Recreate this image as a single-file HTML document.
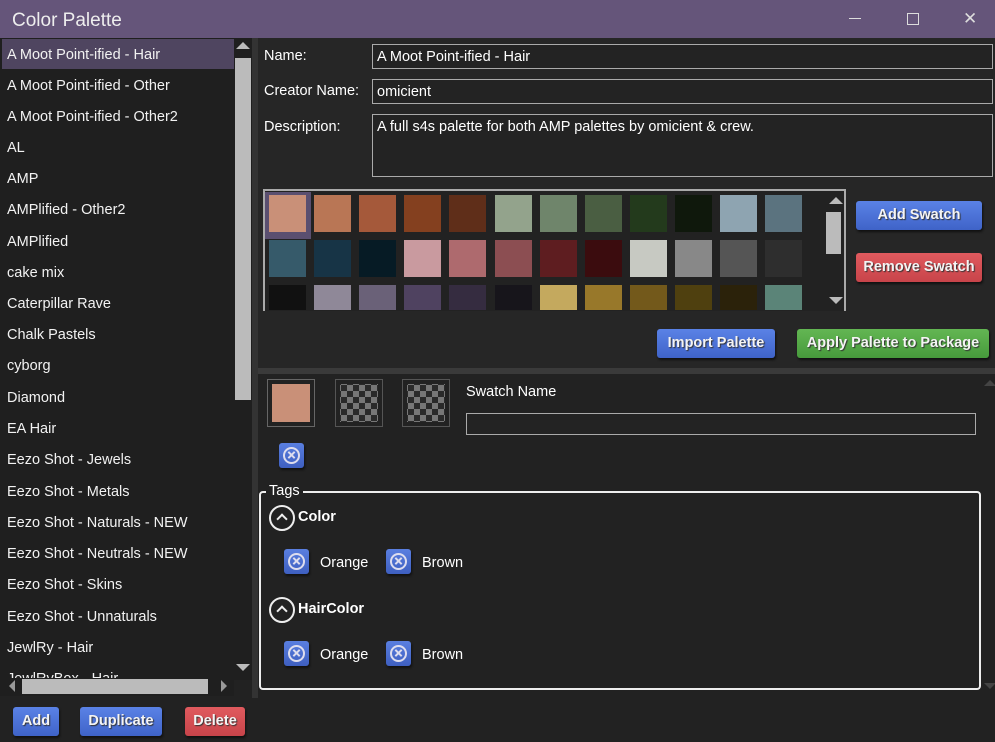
<!DOCTYPE html>
<html><head><style>
*{margin:0;padding:0;box-sizing:border-box}
body{width:995px;height:742px;background:#222;font-family:"Liberation Sans",sans-serif;color:#fff;position:relative;overflow:hidden;font-size:14.5px;line-height:1.45}
.a{position:absolute}
.title{left:0;top:0;width:995px;height:38px;background:#65557a}
.li{position:absolute;left:7px;font-size:14.5px;color:#f2f2f2;margin-top:2px}
.btn{position:absolute;border-radius:3px;font-weight:bold;font-size:14.5px;color:#f4f4f4;text-align:center;text-shadow:1px 1px 1px #333;box-shadow:1px 2px 2px #111}
.blue{background:linear-gradient(#5a82e6,#3f63c8)}
.red{background:linear-gradient(#e05a5e,#c8444a)}
.green{background:linear-gradient(#63b653,#479a3c)}
.inp{position:absolute;border:1px solid #aaa;background:#232323;padding:2px 4px 0;font-size:14.5px}
.sw{position:absolute;width:37px;height:37px}
.x{position:absolute;width:25px;height:25px;border-radius:3px;background:linear-gradient(#5a7fe0,#3e5fc0);box-shadow:1px 2px 2px #111}
.x:after{content:"";position:absolute;left:4px;top:4px;width:13px;height:13px;border:2px solid #dde;border-radius:50%}
.x i{position:absolute;left:8px;top:11px;width:9px;height:2px;background:#dde}
.x i.p{transform:rotate(45deg)}.x i.q{transform:rotate(-45deg)}
.chk{position:absolute;width:48px;height:48px;border:1px solid #555;background-color:#2a2a2a;background-image:linear-gradient(45deg,#777 25%,transparent 25%,transparent 75%,#777 75%),linear-gradient(45deg,#777 25%,transparent 25%,transparent 75%,#777 75%);background-size:12px 12px;background-position:5px 5px,11px 11px;background-clip:content-box;padding:4px}
.up{position:absolute;width:26px;height:26px;border:2px solid #eee;border-radius:50%}
.up:after{content:"";position:absolute;left:7px;top:8px;width:6px;height:6px;border-left:2px solid #eee;border-top:2px solid #eee;transform:rotate(45deg)}
</style></head><body>
<div class="a title"></div>
<div class="a" style="left:12px;top:7px;font-size:19px;color:#eee">Color Palette</div>
<div class="a" style="left:849px;top:18px;width:12px;height:1px;background:#ddd"></div>
<div class="a" style="left:907px;top:13px;width:12px;height:12px;border:1px solid #ddd"></div>
<div class="a" style="left:963px;top:10px;font-size:17px;color:#ddd;line-height:18px">✕</div>

<div class="a" style="left:0;top:38px;width:234px;height:642px;background:#1f1f1f"></div>
<div class="a" style="left:2px;top:39px;width:232px;height:30px;background:#4f4560"></div>
<div class="li" style="top:43px">A Moot Point-ified - Hair</div>
<div class="li" style="top:74px">A Moot Point-ified - Other</div>
<div class="li" style="top:105px">A Moot Point-ified - Other2</div>
<div class="li" style="top:136px">AL</div>
<div class="li" style="top:167px">AMP</div>
<div class="li" style="top:198px">AMPlified - Other2</div>
<div class="li" style="top:230px">AMPlified</div>
<div class="li" style="top:261px">cake mix</div>
<div class="li" style="top:292px">Caterpillar Rave</div>
<div class="li" style="top:323px">Chalk Pastels</div>
<div class="li" style="top:354px">cyborg</div>
<div class="li" style="top:386px">Diamond</div>
<div class="li" style="top:417px">EA Hair</div>
<div class="li" style="top:448px">Eezo Shot - Jewels</div>
<div class="li" style="top:480px">Eezo Shot - Metals</div>
<div class="li" style="top:511px">Eezo Shot - Naturals - NEW</div>
<div class="li" style="top:542px">Eezo Shot - Neutrals - NEW</div>
<div class="li" style="top:573px">Eezo Shot - Skins</div>
<div class="li" style="top:605px">Eezo Shot - Unnaturals</div>
<div class="li" style="top:636px">JewlRy - Hair</div>
<div class="li" style="top:667px;height:11px;overflow:hidden">JewlRyBox - Hair</div>
<div class="a" style="left:234px;top:38px;width:18px;height:642px;background:#1f1f1f"></div>
<div class="a" style="left:236px;top:42px;width:0;height:0;border:7px solid transparent;border-bottom-color:#bbb;border-top:0"></div>
<div class="a" style="left:235px;top:58px;width:16px;height:342px;background:#bbb"></div>
<div class="a" style="left:236px;top:664px;width:0;height:0;border:7px solid transparent;border-top-color:#bbb;border-bottom:0"></div>
<div class="a" style="left:0;top:678px;width:234px;height:18px;background:#1f1f1f"></div>
<div class="a" style="left:22px;top:679px;width:186px;height:15px;background:#bbb"></div>
<div class="a" style="left:9px;top:680px;border:6px solid transparent;border-right-color:#999;border-left:0"></div>
<div class="a" style="left:221px;top:680px;border:6px solid transparent;border-left-color:#999;border-right:0"></div>
<div class="a" style="left:252px;top:38px;width:6px;height:660px;background:#333"></div>

<div class="btn blue" style="left:13px;top:707px;width:46px;height:29px;line-height:29px">Add</div>
<div class="btn blue" style="left:80px;top:707px;width:82px;height:29px;line-height:29px">Duplicate</div>
<div class="btn red" style="left:185px;top:707px;width:60px;height:29px;line-height:29px">Delete</div>

<div class="a" style="left:258px;top:38px;width:737px;height:330px;background:#262626"></div>
<div class="a" style="left:264px;top:46px">Name:</div>
<div class="a" style="left:264px;top:81px">Creator Name:</div>
<div class="a" style="left:264px;top:117px">Description:</div>
<div class="inp" style="left:372px;top:44px;width:621px;height:25px">A Moot Point-ified - Hair</div>
<div class="inp" style="left:372px;top:79px;width:621px;height:25px">omicient</div>
<div class="inp" style="left:372px;top:114px;width:621px;height:63px">A full s4s palette for both AMP palettes by omicient &amp; crew.</div>

<div class="a" style="left:263px;top:189px;width:583px;height:122px;border:2px solid #aaa;border-bottom:none;background:#222;overflow:hidden"></div>
<div class="a" style="left:265px;top:192px;width:46px;height:47px;background:#5a4f70"></div>
<div id="sw"></div>
<div class="a" style="left:829px;top:197px;border:7px solid transparent;border-bottom-color:#bbb;border-top:0"></div>
<div class="a" style="left:826px;top:212px;width:15px;height:42px;background:#bbb"></div>
<div class="a" style="left:829px;top:297px;border:7px solid transparent;border-top-color:#bbb;border-bottom:0"></div>

<div class="btn blue" style="left:856px;top:201px;width:126px;height:29px;line-height:29px">Add Swatch</div>
<div class="btn red" style="left:856px;top:253px;width:126px;height:29px;line-height:29px">Remove Swatch</div>
<div class="btn blue" style="left:657px;top:329px;width:118px;height:29px;line-height:29px">Import Palette</div>
<div class="btn green" style="left:797px;top:329px;width:192px;height:29px;line-height:29px">Apply Palette to Package</div>

<div class="a" style="left:258px;top:368px;width:737px;height:6px;background:#3a3a3a"></div>
<div class="a" style="left:258px;top:374px;width:737px;height:324px;background:#222"></div>
<div class="a" style="left:984px;top:380px;border:6px solid transparent;border-bottom-color:#444;border-top:0"></div>
<div class="a" style="left:984px;top:683px;border:6px solid transparent;border-top-color:#444;border-bottom:0"></div>
<div class="a" style="left:267px;top:379px;width:48px;height:48px;border:1px solid #666;padding:4px"><div style="width:100%;height:100%;background:#c99078"></div></div>
<div class="chk" style="left:335px;top:379px"></div>
<div class="chk" style="left:402px;top:379px"></div>
<div class="a" style="left:466px;top:382px">Swatch Name</div>
<div class="inp" style="left:466px;top:413px;width:510px;height:22px"></div>
<div class="x" style="left:279px;top:443px"><i class="p"></i><i class="q"></i></div>

<div class="a" style="left:259px;top:491px;width:722px;height:199px;border:2px solid #eee;border-radius:4px"></div>
<div class="a" style="left:266px;top:481px;background:#222;padding:0 3px">Tags</div>
<div class="up" style="left:269px;top:505px"></div>
<div class="a" style="left:298px;top:507px;font-weight:bold">Color</div>
<div class="x" style="left:284px;top:549px"><i class="p"></i><i class="q"></i></div>
<div class="a" style="left:320px;top:553px">Orange</div>
<div class="x" style="left:386px;top:549px"><i class="p"></i><i class="q"></i></div>
<div class="a" style="left:422px;top:553px">Brown</div>
<div class="up" style="left:269px;top:597px"></div>
<div class="a" style="left:298px;top:599px;font-weight:bold">HairColor</div>
<div class="x" style="left:284px;top:641px"><i class="p"></i><i class="q"></i></div>
<div class="a" style="left:320px;top:645px">Orange</div>
<div class="x" style="left:386px;top:641px"><i class="p"></i><i class="q"></i></div>
<div class="a" style="left:422px;top:645px">Brown</div>

<script>
var c=[["#c99078","#b97655","#a5593a","#84401f","#5f2e19","#93a38c","#6f856b","#4a5e42","#233a1c","#0f180c","#8ea4b1","#5b737f"],
["#365a6a","#173446","#061b25","#c99a9f","#ae6a6e","#8c4e52","#5e1d20","#3b0c0e","#c7c9c2","#888888","#555555","#2e2e2e"],
["#111111","#8f8898","#6a6178","#4f4260","#352c40","#17151b","#c4a95e","#98782a","#73591b","#4f400f","#2b220a","#5b8478"]];
var h="",ys=[195,240,285],hs=[37,37,25];
for(var r=0;r<3;r++)for(var i=0;i<12;i++)h+='<div class="sw" style="left:'+(269+i*45.1)+'px;top:'+ys[r]+'px;height:'+hs[r]+'px;background:'+c[r][i]+'"></div>';
document.getElementById("sw").innerHTML=h;
</script>
</body></html>
